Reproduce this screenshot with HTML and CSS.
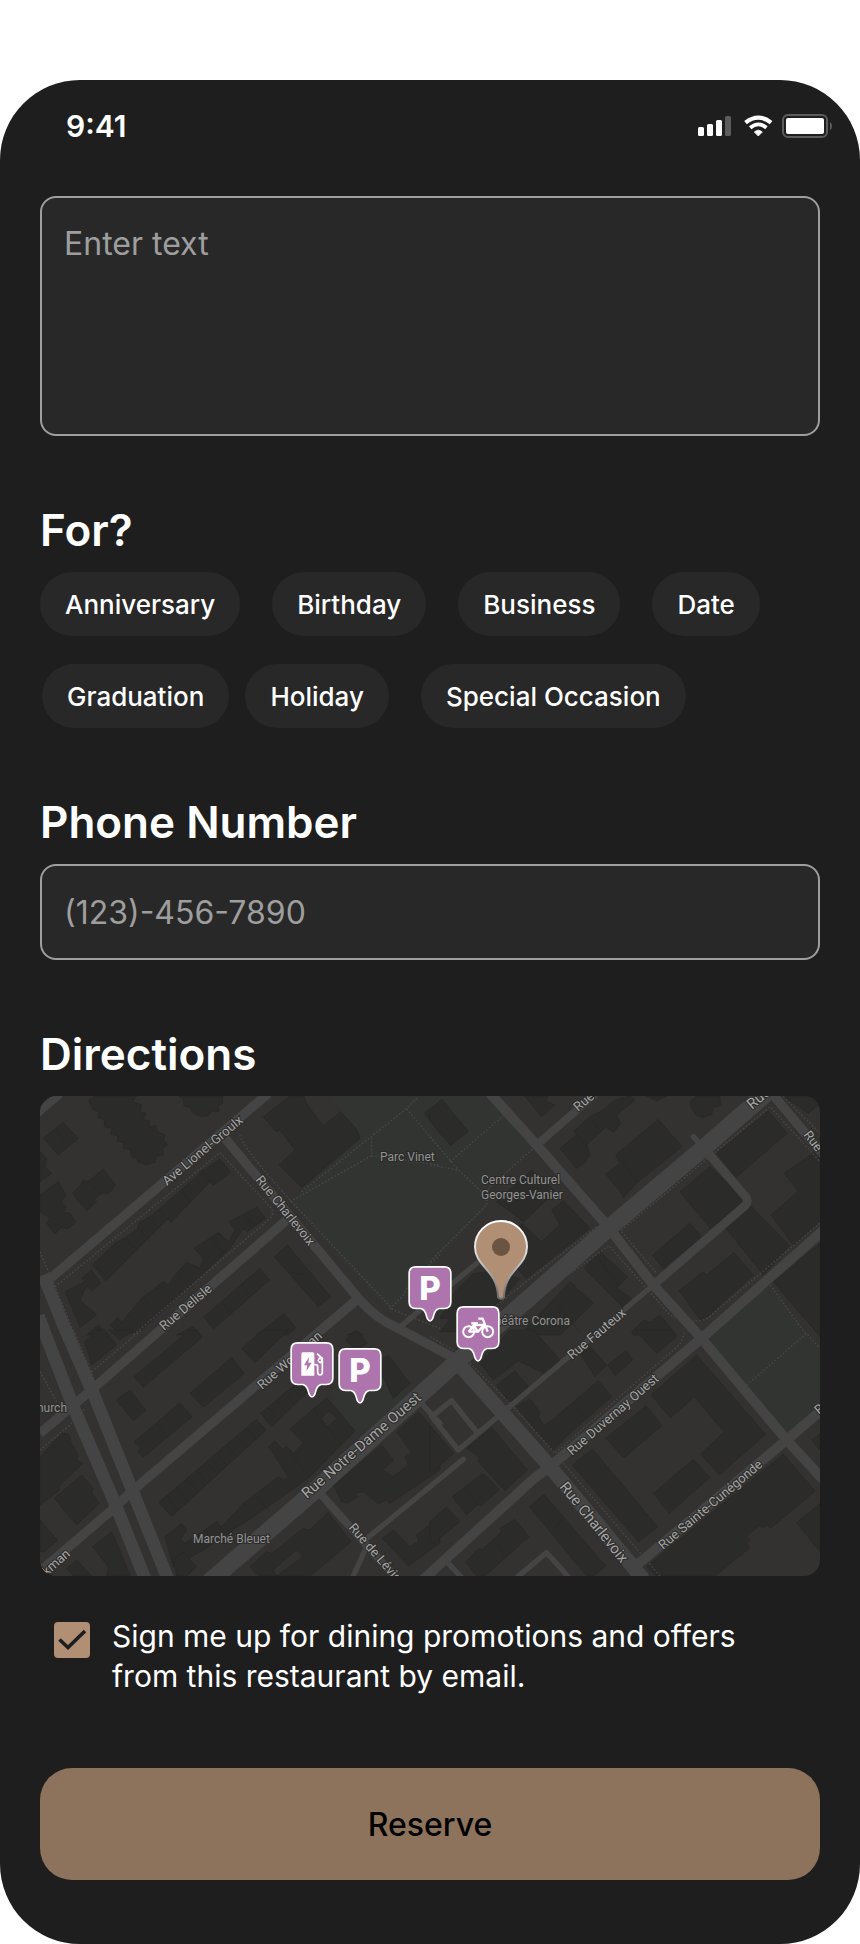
FILE: index.html
```html
<!DOCTYPE html>
<html lang="en">
<head>
<meta charset="utf-8">
<meta name="viewport" content="width=device-width, initial-scale=1">
<title>Reservation</title>
<link rel="stylesheet" href="styles.css">
</head>
<body>
<main class="screen">
  <header class="status">
    <span class="time">9:41</span>
    <svg class="status-icons" viewBox="0 0 134 24" aria-hidden="true">
      <g fill="#fff">
        <rect x="0" y="13" width="6" height="9" rx="1.5"/>
        <rect x="9" y="10" width="6" height="12" rx="1.5"/>
        <rect x="18" y="6" width="6" height="16" rx="1.5"/>
        <rect x="27" y="2" width="6" height="20" rx="1.5" fill="#5c5b5d"/>
        <path d="M60.300 22L56.300 18Q60.300 14.500 64.300 18Z" stroke="#fff" stroke-width=".8" stroke-linejoin="round"/>
        <rect x="88" y="4" width="38" height="16" rx="2"/>
      </g>
      <path d="M47.500 8.600Q60.300 -1.400 73.100 8.600" fill="none" stroke="#fff" stroke-width="4.200"/>
      <path d="M52.200 13.700Q60.300 7 68.400 13.700" fill="none" stroke="#fff" stroke-width="3.800"/>
      <rect x="85" y="1" width="44" height="22" rx="5" fill="none" stroke="#5c5b5d" stroke-width="2"/>
      <path d="M132 8q2 1 2 4t-2 4z" fill="#5c5b5d"/>
    </svg>
  </header>

  <form class="form">
    <textarea class="field field-note" aria-label="Special request" placeholder="Enter text"></textarea>

    <section class="section">
      <h2 class="title">For?</h2>
      <div class="chips">
        <div class="chip-row">
          <button type="button" class="chip">Anniversary</button>
          <button type="button" class="chip">Birthday</button>
          <button type="button" class="chip">Business</button>
          <button type="button" class="chip">Date</button>
        </div>
        <div class="chip-row chip-row-second">
          <div class="chip-pair">
            <button type="button" class="chip">Graduation</button>
            <button type="button" class="chip">Holiday</button>
          </div>
          <button type="button" class="chip">Special Occasion</button>
        </div>
      </div>
    </section>

    <section class="section">
      <h2 class="title"><label for="phone">Phone Number</label></h2>
      <input class="field field-phone" id="phone" type="tel" placeholder="(123)-456-7890">
    </section>

    <section class="section">
      <h2 class="title">Directions</h2>
      <svg class="map" viewBox="0 0 780 480" role="img" aria-label="Map of the restaurant's neighbourhood">
        <defs>
          <linearGradient id="pin-edge" x1="0" y1="0" x2="0" y2="1">
            <stop offset="0" stop-color="#fff"/><stop offset=".4" stop-color="#ddd"/><stop offset="1" stop-color="#666"/>
          </linearGradient>
          <path id="marker" d="M22 2.500H108Q127.500 2.500 127.500 22V108Q127.500 127.500 108 127.500H92Q82 130 78 142L73 158Q65 172 57 158L52 142Q48 130 38 127.500H22Q2.500 127.500 2.500 108V22Q2.500 2.500 22 2.500Z"/>
        </defs>
        <rect width="780" height="480" fill="#343231"/>
        <g transform="scale(.33333)">
          <g fill="#313430">
            <path d="M870 0H1350L1475 157 1350 287 1340 337 1090 607 1050 655 750 317 960 127Z"/>
            <path d="M2185 565L2340 760V930L2245 1020 1990 730Z"/>
            <path d="M870 890L1010 790 1110 900 945 1030Z"/>
          </g>
          <g fill="#2b2b2a" stroke="#272726" stroke-width="2">
            <g transform="translate(-30 -33)">
              <path d="M195 33H320L308 50 335 60 330 80 348 85 340 105 360 108 355 125 378 122 382 140 405 150 400 165 412 180 398 190 400 210 380 212 375 232 350 240 325 232 320 218 305 215 300 195 280 190 282 175 262 168 264 152 242 148 245 130 222 125 225 105 205 98 207 80 190 75 176 45Z"/>
              <path d="M445 33H578V55L565 62 568 80 545 78 535 92 515 95 490 85 482 68 462 62 460 42Z"/>
              <path d="M40 160L100 112 145 160 85 210ZM78 133L118 182"/>
              <path d="M30 200L50 220 45 245 65 265 30 290Z"/>
              <path d="M30 330L85 290 108 330 95 350 110 365 100 382 120 385 138 412 110 432 95 427 75 447 50 415 60 400 30 380Z"/>
              <path d="M127 325L152 300 160 285 175 290 220 252 257 300 235 326 215 325 190 345 200 350 170 378ZM175 290L212 328"/>
              <path d="M515 260L570 222 603 262 550 300 540 290 425 410 412 402 228 587 188 540 255 475 290 455 325 430 325 415 360 395 385 375ZM514 258L545 295M452 315L480 350M385 375L425 412M355 400L395 435M322 425L360 470M286 460L325 500M250 490L290 530"/>
              <path d="M597 410L680 367 706 400 652 440 640 430 600 490 440 640 330 740 270 750 240 720 262 697 275 712 335 640 400 590 415 600 435 570 470 532 510 550 520 520 492 490 565 443 597 470 615 435ZM645 395L680 425M545 460L580 505M440 565L480 610M340 640L390 690"/>
              <path d="M105 620L165 590 155 580 185 555 213 595 185 618 170 602 150 645 200 690 150 727Z"/>
              <path d="M733 515L772 480 902 635 865 665ZM775 560L822 570"/>
              <path d="M522 695L690 550 719 585 550 732ZM575 650L608 690M635 598L665 635"/>
              <path d="M680 750L762 685 798 728 775 750Z"/>
              <path d="M170 750L205 720 235 750ZM440 750L490 725 510 750ZM950 750L980 738 1000 750Z"/>
              <path d="M700 95L780 33H822L832 60 880 123 932 80 978 130 990 160 815 308 747 240 795 195 750 135 738 140Z"/>
              <path d="M1183 85L1230 48V140Z"/>
            </g>
            <g transform="translate(1170 -33)">
              <path d="M0 80L35 42 115 140 62 182 0 110Z"/>
              <path d="M283 33H355L345 48 375 60 335 95Z"/>
              <path d="M390 190L440 150 430 140 480 95 520 75 555 45 600 33 615 45 560 90 572 115 550 143 528 125 470 180 480 210 462 235 440 250ZM480 100L515 140M440 150L470 185"/>
              <path d="M557 210L685 103 756 185 625 290 580 338 575 325 527 268 570 235ZM570 220L620 290"/>
              <path d="M650 33H710L680 48Z"/>
              <path d="M780 50L800 33H870L872 60 850 68 845 88 820 98 800 92 785 70Z"/>
              <path d="M860 205L1015 78 1071 145 918 277Z"/>
              <path d="M750 320L840 245 950 345 845 435Z"/>
              <path d="M888 430L962 362 1078 482 1000 570Z"/>
              <path d="M1063 265L1170 190V410L1090 480 1023 390 1105 318Z"/>
              <path d="M668 510L780 415 815 455 700 552Z"/>
              <path d="M747 617L820 560 830 570 912 503 970 570 815 710Z"/>
              <path d="M200 350L305 255 375 320 280 410Z"/>
              <path d="M365 375L400 347 480 430 290 580 240 530 275 415 335 470 390 420Z"/>
              <path d="M75 620L130 565 190 560 270 580 130 740H30L60 700 30 700Z"/>
              <path d="M463 550L510 500 592 575 560 610 605 640 580 670ZM500 515L565 600"/>
              <path d="M270 750L420 590 490 655 390 750ZM370 645L450 740"/>
              <path d="M605 740L640 705 660 712 690 690 740 750H610Z"/>
              <path d="M1060 33H1160L1165 60 1135 85Z"/>
              <path d="M1030 590L1170 475V755Z"/>
            </g>
            <g transform="translate(-30 702)">
              <path d="M165 35L200 0H225L260 45 185 105ZM235 0H310L270 30Z"/>
              <path d="M312 140L480 0H500L516 22 340 172Z"/>
              <path d="M480 190L605 82 643 130 520 232Z"/>
              <path d="M635 55L700 0H775L675 98Z"/>
              <path d="M258 210L300 180 347 240 310 272Z"/>
              <path d="M313 335L450 218 486 260 340 382 325 368 330 352ZM380 280L415 325"/>
              <path d="M387 517L680 267 708 300 425 560ZM650 295L680 330M620 320L650 355M590 345L618 380M560 370L590 405M530 395L560 430M500 420L530 458M470 445L502 485M440 472L472 512M412 498L445 540"/>
              <path d="M692 250L800 160 850 170 725 290ZM715 232L748 270M740 210L772 250M765 190L798 230"/>
              <path fill-rule="evenodd" d="M780 297L890 203 975 302 840 440 800 470 700 540 610 600 520 660 430 710 405 620 455 580 470 600 450 630 465 640 560 575 575 590 640 520 745 440 760 450 775 440 715 350 735 333 760 358 768 348 790 370 820 340ZM872 267L897 242 920 265 893 290ZM850 235L930 340M770 360L835 435M680 500L720 545"/>
              <path d="M945 30L980 0 1013 40 980 60Z"/>
              <path d="M1040 100L1075 75 1140 160 1090 205Z"/>
              <path d="M30 380L95 310Q125 305 122 335L145 375 140 390 158 400 85 470 90 480 30 525Z"/>
              <path d="M72 505L155 435 190 475 185 490 208 520 140 585Z"/>
              <path d="M30 570L82 630 45 665 30 665Z"/>
              <path d="M188 650L245 605 265 650 300 738H230L235 710Z"/>
              <path d="M110 715L140 690 185 738H130Z"/>
              <path d="M660 710L710 665 725 670 820 595 838 600 895 548 963 635 840 738H740L820 680 800 660 730 720 740 738H685Z"/>
              <path d="M910 465L1055 345 1090 390 1060 420 1090 440 1135 405 1125 380 1145 370 1100 305 1165 245 1230 320V420L1080 520 1070 510 1045 522 1000 485 975 490 985 500 950 520 935 515Z"/>
              <path d="M1057 625L1090 600 1140 650 1165 635 1160 615 1230 560V640L1135 708Z"/>
              <path d="M430 690L460 665 500 710 470 738H440Z"/>
            </g>
            <g transform="translate(1170 702)">
              <path d="M110 355L185 292 292 420 225 482 145 395V380Z"/>
              <path d="M0 290L72 370 0 430Z"/>
              <path d="M67 500L100 475 155 432 170 438 208 480 152 528 145 522 110 555ZM105 475L145 525"/>
              <path d="M0 575L50 530 90 575 10 640 0 628Z"/>
              <path d="M107 697L145 655 155 660 215 605 210 595 255 568 297 620 165 738H140ZM190 625L225 680"/>
              <path d="M298 530L342 493 527 708 490 738H470ZM370 600L395 570"/>
              <path d="M200 165L255 122 295 170 240 220Z"/>
              <path d="M150 100L240 0H310L390 90 350 135 265 92 190 150Z"/>
              <path d="M258 230L300 207 330 245 325 260 340 285 360 275 505 152 545 200 400 328 370 362ZM430 220L470 265"/>
              <path d="M450 70L480 50 530 105 495 140Z"/>
              <path d="M533 105L588 62 608 90 555 136Z"/>
              <path d="M615 0H720L740 20 680 70Z"/>
              <path d="M663 195L800 75 1007 313 868 435 812 372 882 305 793 200 722 264Z"/>
              <path d="M527 325L648 227 696 287 582 384Z"/>
              <path d="M427 405L487 357 683 590 626 636Z"/>
              <path d="M670 490L790 388 840 442 718 550Z"/>
              <path d="M650 710L1060 372 1155 483 1022 595 1010 585 1000 592 988 588 950 618 960 630 950 640 958 655 855 738H680Z"/>
              <path d="M1100 578L1170 520V665Z"/>
              <path d="M1145 330L1170 312V360Z"/>
            </g>
          </g>
          <g fill="none" stroke="#484745" stroke-width="4" stroke-dasharray="5 6">
            <path transform="translate(-30 -33)" d="M30 500L75 605 135 750M75 605L570 203 715 360Q740 385 715 405L310 750M630 150Q632 180 780 345L1090 675 1230 730M780 350L1025 212V160M815 320L1130 70 1165 35M1130 72L1230 190M1025 212L1230 240M1080 672L1120 630 1140 590 1230 510"/>
            <path transform="translate(1170 -33)" d="M0 155L85 255 155 320M60 230L220 92M0 240L85 255M0 530L170 360 175 310 310 190M200 660L500 425M575 435L1020 65 1175 235M245 690L540 480M540 485L720 690Q810 730 850 685L1175 410M575 440L680 565M1020 600L1130 750M1060 35L1175 150"/>
            <path transform="translate(-30 702)" d="M130 0L185 130 210 200M185 125L335 0M30 125L80 215M30 360L120 285 165 235"/>
            <path transform="translate(1170 702)" d="M120 100L250 230 375 370 730 60Q765 35 760 0M400 400L690 738M950 165L1130 10 1170 55M0 20L70 60"/>
          </g>
          <g fill="none" stroke="#444" stroke-linejoin="round">
            <path stroke-width="24" d="M-10 54L60 -6M840 1192L975 1342 1090 1470M1490 147L1665 -5"/>
            <path stroke-width="28" d="M685 -8L20 557M555 127L955 607Q1010 670 1075 697L1235 782M740 372L160 877 0 1012M955 607L280 1182 210 1247 -10 1435M2195 -8L2345 170"/>
            <path stroke-width="30" d="M1350 -8L1490 147 1700 387 1840 567 1980 722 2240 1032 2350 1152M2350 403L1990 722 1530 1112 1485 1145 1150 1450M2350 938L2240 1032 1785 1412"/>
            <path stroke-width="26" d="M1995 160L2115 300Q2130 317 2112 332L1840 567"/>
            <path stroke-width="16" stroke-linecap="round" d="M1840 567L1255 1062 1175 962 1235 914 1310 1008M1960 122L1995 160M975 1332L1270 1090M975 1362L940 1440M1135 912L1200 982M1175 962L1200 942M1225 1402L1270 1450M1430 1445L1520 1370 1590 1448M1075 697L1310 502"/>
            <path stroke-width="38" d="M-5 660L100 932 225 1222 320 1460M10 537L70 687 160 892 388 1460"/>
            <path stroke-width="44" d="M1250 797L1400 965 1530 1112 1810 1450"/>
            <path stroke-width="52" d="M2190 -18L1990 157 1705 397 1250 797 815 1192 505 1460"/>
          </g>
        </g>
        <g class="map-text">
          <text transform="translate(127 90) rotate(-40)">Ave Lionel-Groulx</text>
          <text transform="translate(215 84) rotate(51)">Rue Charlevoix</text>
          <text transform="translate(124 235) rotate(-40)">Rue Delisle</text>
          <text transform="translate(222 294) rotate(-41)">Rue Workman</text>
          <text transform="translate(31 459) rotate(-41)" text-anchor="end">Rue Workman</text>
          <text transform="translate(532 264) rotate(-40)">Rue Fauteux</text>
          <text transform="translate(532 360) rotate(-41)">Rue Duvernay Ouest</text>
          <text transform="translate(623 454) rotate(-40)">Rue Sainte-Cunégonde</text>
          <text transform="translate(308 432) rotate(49)">Rue de Lévis</text>
          <text transform="translate(538 16) rotate(-40)">Rue</text>
          <text transform="translate(763 39) rotate(52)">Rue à</text>
          <text transform="translate(779 319) rotate(-40)">Rue</text>
          <g class="map-main">
            <text transform="translate(712 14) rotate(-40)">Rue</text>
            <text transform="translate(519 391) rotate(51)">Rue Charlevoix</text>
            <text transform="translate(267 403) rotate(-41)">Rue Notre-Dame Ouest</text>
          </g>
          <g class="map-place">
            <text x="340" y="65">Parc Vinet</text>
            <text x="441" y="88">Centre Culturel</text>
            <text x="441" y="103">Georges-Vanier</text>
            <text x="530" y="229" text-anchor="end">Théâtre Corona</text>
            <text x="153" y="447">Marché Bleuet</text>
            <text x="27" y="316" text-anchor="end">Church</text>
          </g>
        </g>
        <g transform="scale(.33333) translate(690 342)">
          <path d="M693 33C649 33 615 68 615 111C615 170 684 180 684 262Q693 272 702 262C702 180 771 170 771 111C771 68 737 33 693 33Z" fill="#b08f74" stroke="url(#pin-edge)" stroke-width="6"/>
          <circle cx="693" cy="111" r="27" fill="#6b5442"/>
          <g fill="#ad74ae" stroke="#fff" stroke-width="5">
            <use href="#marker" x="415" y="168"/>
            <use href="#marker" x="559" y="288"/>
            <use href="#marker" x="61" y="396"/>
            <use href="#marker" x="205" y="414"/>
          </g>
          <g fill="none" stroke="#fff" stroke-width="6" stroke-linejoin="round">
            <circle cx="596" cy="365" r="16.500"/>
            <circle cx="653" cy="365" r="16.500"/>
            <path d="M596 365L612 345H640M610 345L624 365H596M624 365L644 343M625 326H638L653 365" stroke-width="7"/>
            <path d="M604 340H624" stroke-width="7"/>
          </g>
          <path fill="#fff" d="M98 427H128Q133 427 133 432V497H94V432Q94 427 98 427Z"/>
          <path fill="#ad74ae" d="M117 441L102 466H112L109 484 125 458H115Z"/>
          <path d="M133 464H137Q143 464 143 470V486Q143 495 150 495T157 486V445L141 431" fill="none" stroke="#fff" stroke-width="5"/>
          <path d="M147 441L157 447V460Q144 462 143 451Z" fill="#fff"/>
          <circle cx="150" cy="451" r="3" fill="#ad74ae"/>
        </g>
        <g class="parking" text-anchor="middle">
          <text x="390" y="204">P</text>
          <text x="320" y="286">P</text>
        </g>
      </svg>
    </section>

    <label class="consent">
      <input class="consent-box" type="checkbox" checked>
      <span>Sign me up for dining promotions and offers from this restaurant by email.</span>
    </label>

    <button type="submit" class="reserve">Reserve</button>
  </form>
</main>
</body>
</html>
```
FILE: styles.css
```css
* {
  box-sizing: border-box;
}

body {
  margin: 0;
  padding-top: 80px;
  background: #fff;
  color: #fff;
  font-family: Inter, "Liberation Sans", sans-serif;
}

button,
input,
textarea {
  margin: 0;
  font: inherit;
}

.screen {
  background: #1e1e1e;
  border-radius: 80px;
  overflow: hidden;
}

.status {
  display: flex;
  align-items: center;
  justify-content: space-between;
  height: 92px;
  padding: 0 28px 0 66px;
}

.time {
  font-size: 30px;
  font-weight: 600;
}

.status-icons {
  width: 134px;
  height: 24px;
}

.form {
  display: flex;
  flex-direction: column;
  padding: 24px 40px 64px;
}

.field {
  display: block;
  width: 100%;
  border: 2px solid #9e9e9e;
  border-radius: 16px;
  background: #282828;
  color: #fff;
  font-size: 32px;
  line-height: 40px;
  outline: none;
}

.field::placeholder {
  color: #9e9e9e;
  opacity: 1;
}

.field-note {
  height: 240px;
  padding: 26px 22px;
  resize: none;
}

.field-phone {
  height: 96px;
  padding: 0 22px;
}

.section {
  display: flex;
  flex-direction: column;
  gap: 16px;
  margin-top: 68px;
}

.title {
  margin: 0;
  font-size: 44px;
  font-weight: 600;
  line-height: 52px;
}

.chips {
  display: flex;
  flex-direction: column;
  gap: 28px;
}

.chip-row {
  display: flex;
  gap: 32px;
}

.chip-row-second {
  padding-left: 2px;
}

.chip-pair {
  display: flex;
  gap: 16px;
}

.chip {
  height: 64px;
  padding: 0 25px;
  border: 0;
  border-radius: 32px;
  background: #282828;
  color: #fff;
  font-size: 26px;
  font-weight: 500;
  white-space: nowrap;
}

.map {
  display: block;
  width: 100%;
  border-radius: 16px;
}

.map-text {
  font-family: Roboto, "Liberation Sans", sans-serif;
  font-size: 13px;
  fill: #a6a6a5;
  stroke: #2a2a29;
  stroke-width: 2px;
  paint-order: stroke;
}

.map-main {
  font-size: 15px;
}

.map-place {
  font-size: 12px;
  fill: #929291;
}

.parking {
  font-size: 33px;
  font-weight: 800;
  fill: #fff;
}

.consent {
  display: flex;
  align-items: flex-start;
  gap: 22px;
  margin-top: 40px;
  padding: 0 40px 0 14px;
  font-size: 30px;
  line-height: 40px;
}

.consent-box {
  appearance: none;
  flex: none;
  width: 36px;
  height: 36px;
  margin-top: 6px;
  border-radius: 4px;
  background: #b08f74 url("data:image/svg+xml,%3Csvg xmlns='http://www.w3.org/2000/svg' viewBox='0 0 36 36'%3E%3Cpath d='M5.500 17.500L14 25.500L31 9' fill='none' stroke='%231e1e1e' stroke-width='3.600'/%3E%3C/svg%3E") center / 100% no-repeat;
}

.reserve {
  height: 112px;
  margin-top: 72px;
  border: 0;
  border-radius: 32px;
  background: #8d735c;
  color: #000;
  font-size: 32px;
  font-weight: 500;
}
```
